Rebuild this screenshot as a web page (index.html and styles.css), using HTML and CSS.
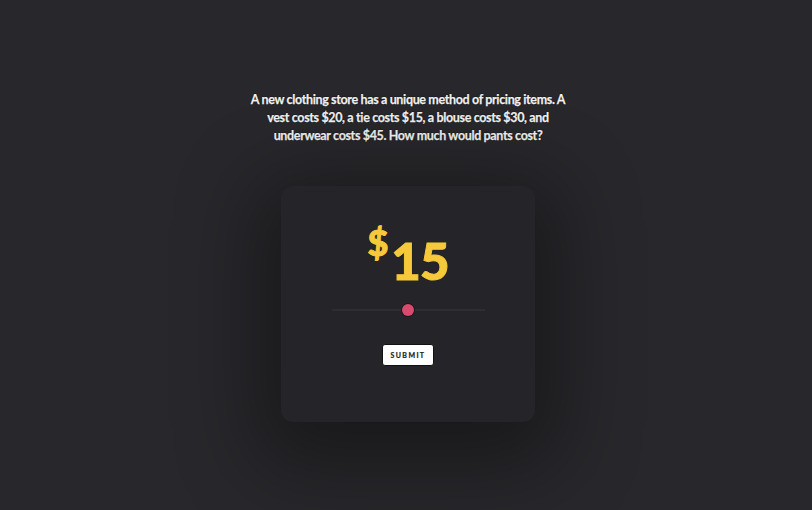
FILE: index.html
```html
<!DOCTYPE html>
<html>
<head>
<meta charset="utf-8">
<link rel="stylesheet" href="styles.css">
</head>
<body>
<main class="page">
  <p class="question">A new clothing store has a unique method of pricing items. A vest costs $20, a tie costs $15, a blouse costs $30, and underwear costs $45. How much would pants cost?</p>
  <section class="card">
    <div class="price"><span class="dollar">$</span><span class="amount">15</span></div>
    <div class="slider"><span class="track"></span><span class="thumb"></span></div>
    <button class="submit">SUBMIT</button>
  </section>
</main>
</body>
</html>
```
FILE: styles.css
```css
html, body {
  margin: 0;
  height: 100%;
  background: #28272b;
  font-family: "Source Sans Pro", "Lato", "Open Sans", sans-serif;
}
.page {
  display: flex;
  flex-direction: column;
  align-items: center;
  padding-top: 91px;
  padding-left: 4px;
}
.question {
  margin: 0;
  width: 326px;
  text-align: center;
  color: #f2f2f2;
  font-weight: 700;
  font-size: 12.5px;
  letter-spacing: -0.35px;
  line-height: 18px;
  -webkit-text-stroke: 0.25px #f2f2f2;
  text-shadow: 0 0 1px #000, 0 0 1px #000;
}
.card {
  margin-top: 41px;
  width: 254px;
  height: 236px;
  box-sizing: border-box;
  border-radius: 12px;
  background: #252428;
  box-shadow: 0 20px 80px 25px rgba(0,0,0,0.38);
  display: flex;
  flex-direction: column;
  align-items: center;
  padding-top: 38px;
}
.price {
  display: flex;
  align-items: flex-start;
  color: #f6c93c;
  font-weight: 900;
  -webkit-text-stroke: 1px #f6c93c;
  text-shadow: 0 0 1px #000, 0 0 1px #000;
  height: 62px;
}
.dollar {
  font-size: 36px;
  line-height: 36px;
  margin-right: 3px;
}
.amount {
  font-size: 51px;
  line-height: 51px;
  margin-top: 11px;
  letter-spacing: -1px;
}
.slider {
  position: relative;
  width: 153px;
  height: 14px;
  margin-top: 17px;
  display: flex;
  align-items: center;
}
.track {
  width: 100%;
  height: 2px;
  background: #2e2d32;
}
.thumb {
  position: absolute;
  left: 70px;
  top: 1px;
  width: 12px;
  height: 12px;
  border-radius: 50%;
  background: #d94a6f;
  box-shadow: 0 0 0 1px #1a1a1c;
}
.submit {
  margin-top: 27px;
  width: 52px;
  height: 22px;
  padding: 0;
  background: #fff;
  border: 1px solid #111;
  border-radius: 3px;
  font-family: inherit;
  font-weight: 700;
  font-size: 7px;
  letter-spacing: 1.4px;
  -webkit-text-stroke: 0.2px #222;
  color: #222;
  cursor: pointer;
}
```
